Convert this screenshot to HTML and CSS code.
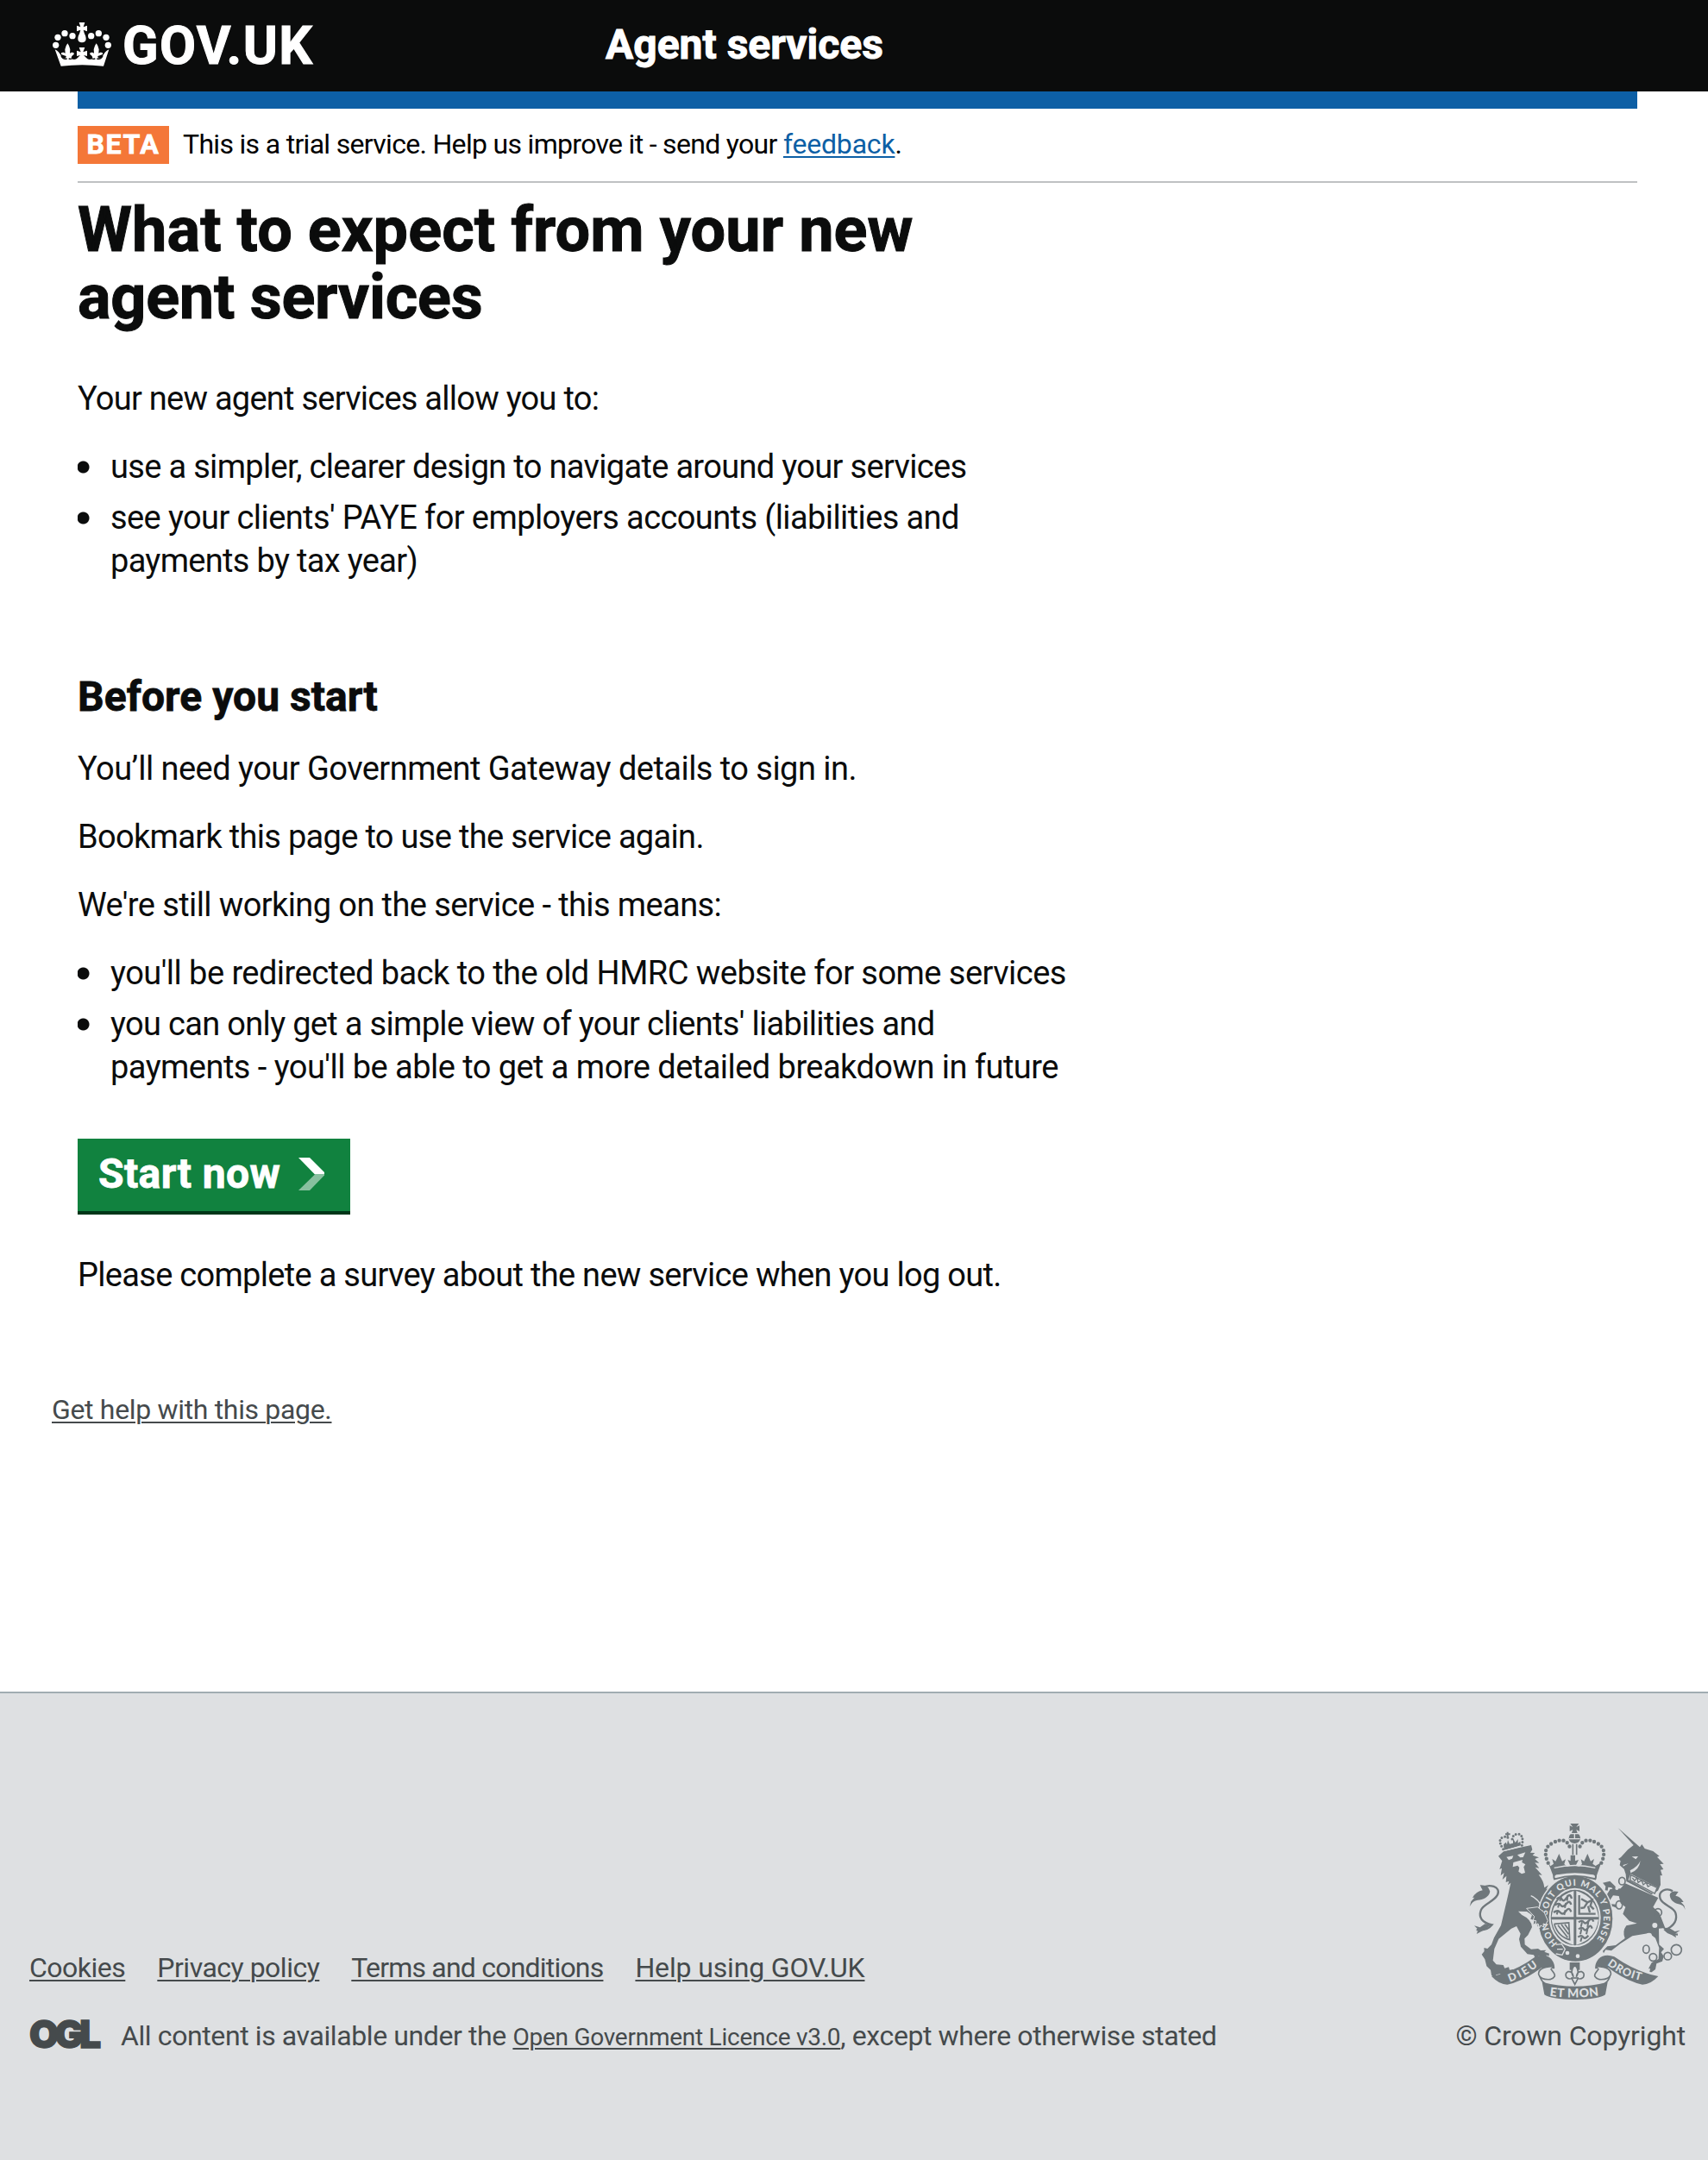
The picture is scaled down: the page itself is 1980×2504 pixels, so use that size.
FILE: index.html
```html
<!DOCTYPE html>
<html lang="en">
<head>
<meta charset="utf-8">
<title>Agent services - GOV.UK</title>
<link rel="stylesheet" href="styles.css">
</head>
<body>
<header class="header">
  <a class="logo" href="#">
    <svg class="crown" viewBox="60 75 210 159" aria-hidden="true">
      <g fill="#fff">
        <circle cx="74" cy="157" r="11"/><circle cx="81" cy="130" r="11"/><circle cx="105" cy="116" r="11"/><circle cx="132" cy="125" r="11"/>
        <circle cx="256" cy="157" r="11"/><circle cx="249" cy="130" r="11"/><circle cx="223" cy="116" r="11"/><circle cx="197" cy="125" r="11"/>
        <path d="M155 78h20l-5 16 13-5v20l-13-5 3 11c4 8 6 14 6 20 0 9-6 13-14 13s-14-4-14-13c0-6 2-12 6-20l3-11-13 5V89l13 5z"/>
        <path d="M71 172q14 7 22 23c6 12 18 9 17 0l-7-2-10-4q-2-8 8-7l6 3-1-13q3-14 9-21 6 7 9 21l-1 13 6-3q10-1 8 7l-7 6-2 6c4 8 16 7 22 0l9-9-12 3v-19l14 5-6-16h20l-6 16 14-5v19l-12-3 9 9c6 7 18 8 22 0l-2-6-7-6q-2-8 8-7l6 3-1-13q3-14 9-21 6 7 9 21l-1 13 6-3q10-1 8 7l-10 4-7 2c-1 9 11 12 17 0q8-16 22-23l-19 58q-74-9-148 0z"/>
      </g>
      <path d="M93 194q6 14 20 10M119 204q14 4 22-7M189 197q8 11 22 7M217 204q14 4 20-10" fill="none" stroke="#0b0c0c" stroke-width="4"/>
    </svg>
    <span class="logo-text">GOV.UK</span>
  </a>
  <span class="service-name">Agent services</span>
</header>

<main class="content">
  <div class="phase">
    <strong class="phase-tag">BETA</strong>
    <span class="phase-text">This is a trial service. Help us improve it - send your <a href="#">feedback</a>.</span>
  </div>
  <h1><span class="h1-first">What to expect from your new</span><br>agent services</h1>
  <p class="intro">Your new agent services allow you to:</p>
  <ul>
    <li class="snug">use a simpler, clearer design to navigate around your services</li>
    <li>see your clients' PAYE for employers accounts (liabilities and<br><span class="snug">payments by tax year)</span></li>
  </ul>
  <h2>Before you start</h2>
  <p class="loose">You’ll need your Government Gateway details to sign in.</p>
  <p class="snug">Bookmark this page to use the service again.</p>
  <p>We're still working on the service - this means:</p>
  <ul>
    <li class="loose">you'll be redirected back to the old HMRC website for some services</li>
    <li class="loose"><span class="snug">you can only get a simple view of your clients' liabilities and</span><br>payments - you'll be able to get a more detailed breakdown in future</li>
  </ul>
  <a class="start" href="#">Start now
    <svg viewBox="0 0 30 38" aria-hidden="true"><path d="M0 0h13l17 17v2.500H19z" fill="#fff"/><path d="M19 19.500h11v1L13 38H0z" fill="#88c09f"/></svg>
  </a>
  <p class="survey">Please complete a survey about the new service when you log out.</p>
</main>
<div class="help"><a href="#">Get help with this page.</a></div>

<footer class="footer">
  <div class="footer-main">
    <nav class="footer-nav">
      <a href="#">Cookies</a><a href="#">Privacy policy</a><a class="terms" href="#">Terms and conditions</a><a class="using" href="#">Help using GOV.UK</a>
    </nav>
    <div class="licence">
      <span class="ogl">OGL</span>
      <span>All content is available under the <a href="#">Open Government Licence v3.0</a>, except where otherwise stated</span>
    </div>
  </div>
  <a class="copyright" href="#">
    <svg class="arms" viewBox="70 66 756 618" aria-hidden="true">
      <defs>
        <path id="garter" d="M378 485A98 113 0 1 1 502 485"/>
        <path id="dieu" d="M212 620Q268 600 318 558"/>
        <path id="droit" d="M550 560Q606 603 672 616"/>
        <path id="etmon" d="M350 668Q437 680 526 666"/>
      </defs>
      <g class="ink">
        <!-- lion -->
        <path d="M172 182l19-17 53-12 42-9 4 16-7 10 16 1-8 8 22 8-14 5 15 14-15-1 15 19-14-3 24 27-12-1q18 22 20 45l14-9-8 15 17-8-13 23-12 8-8 23 8 14-3 22 11 14-9 10 7 14-10-3-1 12-10-9-6 10-5-15-10 6 3-14-13-4 5-14-18-12-30-1 12 12q34 16 36 43l-14 28-12 12 1 21 22 16 24-2 9 6 19-1-6 6 17 6-2 9-8-4 1 11-14-7-4 9-8-10-14 7-5-10-22-3-23-26-6-26 5-19-14-26-18 8-44 36-15 35-5 40 12 14 24 2 5 11 14-4 3 10 12-2 6 15-11-4-6 13-11-9-9 10-15-9-13 3-6 11-10-10-3-18-14-13-6-24-11-17 9-11-1-12 12 3 14-14 9-24 24-43 24-102 10-46-10 8 4-14-11 4 2-22-14 13 6-24-12 10 4-26-8 4 9-29z"/>
        <!-- unicorn -->
        <path d="M588 84l76 67 7-10 10 15 29 9 22 17-8 3 23 24-13 1 12 18-10 2 6 20-7-1 1 33-9 20-22 14-88-46-2-25-6-18-15-13 3-15-8-7 9-6 24-26 20-16z"/>
        <path d="M613 277l115 50-18 32 22 21 20 52-22 2 1 56 17 15-10 12 9 13-5 18-20 8-4 20-13 10-7-1 2-12-6 1 11-21 24-13 2-39-13-34-22-17-58 10-41 26-32 25-20-3-7 12-3-8 16-16 29-4 32-24q-10-24 5-44l37-8-27-9-22-24 9-24-17-13-6-25-20-2-13 20 8 10 14 1 3 12-13-5-7 4-11-15-9-20 18-29 36-2z"/>
        <path d="M535 275l25-6 17 17 14 19-10 11-15-24-12-2-2 12-9-1 2-14z"/>
      </g>
      <!-- tails -->
      <g class="line">
        <path d="M96 438q35 6 54-17-52-12-39-50c7-23 44-28 58-54 14-30-31-40-54-23" stroke-width="7"/>
        <path d="M796 455q-30 0-44-16 48-22 36-60c-9-22-43-25-53-48-10-30 24-40 43-27" stroke-width="7"/>
      </g>
      <g class="ink">
        <path d="M72 358l5-18 12-14-7 1q13-23 35-26l-9-18q30-1 35 22c-4 21-25 28-43 30-16 4-20 9-28 23z"/>
        <path d="M822 369l-4-15-11-12 9 0q-10-19-28-22l10-14q-28-6-30 12c2 22 22 30 36 32 11 3 14 9 18 19z"/>
        <path d="M88 424l20 6 17-12 24 1-26 20-27 14 6-15z"/><path d="M804 440l-18 4-20-12-22-1 22 20 24 15-3-14z"/>
      </g>
      <!-- lion's face -->
      <g class="cut">
        <path d="M200 185l24-4-4 10-12 5zM238 178l28-9-8 17-10 1zM224 204l32-9-2 9 12 7-6 9 5 20-12 4-11-8 3-14-6-7-17 5z"/>
        <path d="M636 184l22-1-8 10zM606 213l18-5-18 10zM630 232q28-14 36-34-4 32-34 43z"/>
        <path d="M632 244l92 46-10 25-90-50z"/>
      </g>
      <path class="line" d="M633 248l91 44-8 20-86-46zM638 258l8 10 8-12 4 18 12-8 6 16 10-8 6 14 12-6" stroke-width="4"/>
      <path d="M285 320q36 15 52 72" class="cutline" stroke-width="4"/>
      <!-- garter and shield -->
      <ellipse cx="440" cy="400" rx="131" ry="150" class="ink garter-edge"/>
      <ellipse cx="438" cy="396" rx="90" ry="103" class="cut"/>
      <ellipse cx="438" cy="396" rx="84" ry="97" class="ink"/>
      <g class="cut">
        <path d="M434 303v91h-77q8-70 77-91zM443 303q69 21 77 91h-77zM434 403v88q-67-18-77-88zM443 403h77q-10 70-77 88z"/>
      </g>
      <g class="line" stroke-width="7">
        <path d="M375 332q12-12 18 0t17-6 17 4M368 353q14-10 21 0t19-5 17 3M364 378q14-11 23 0t20-5 18 3"/>
        <path d="M390 324l-4 14M413 318l-2 20M385 345l-6 16M407 345l-4 17M380 370l-5 15M405 370l-4 17" stroke-width="6"/>
        <path d="M453 318v65h57M460 331l22 12 16-8-6 20 12 12M482 343l-12 18-12 2M484 356l6 22" />
        <path d="M451 412q12-9 18 0t17-5 17 3M451 436q12-9 18 0t15-5 14 3M449 464q12-9 18 0t18-6"/>
        <path d="M463 412l-4 16M485 409l-3 20M461 436l-4 18M482 436l-4 18M462 464l-4 15" stroke-width="6"/>
        <path d="M366 418l51-4 3 59q-39-9-54-55M379 422l34 43M391 420l25 34M403 419l14 20" stroke-width="5"/>
      </g>
      <g class="cutline" stroke-width="4"><path d="M372 490l20-2 12 18-10 20-22-4M396 506h-20"/></g>
      <g class="cut"><circle cx="412" cy="519" r="7"/><circle cx="448" cy="530" r="7"/></g>
      <text class="motto garter-text"><textPath href="#garter" textLength="508" lengthAdjust="spacing">HONI SOIT QUI MAL Y PENSE</textPath></text>
      <!-- forepaws over the garter -->
      <path class="ink cut-edge" d="M270 364l38-5 24 20 12 28-8 13-8-3 2 12-11-6-4 9-5-15-9 4 2-14-10-2 4-13z"/>
      <!-- royal crown -->
      <g class="ink">
        <path d="M422 69h30l-9 12 11-5v20l-11-6 4 12q10 6 10 20-3 14-20 16-17-2-20-16 0-14 10-20l4-12-11 6V76l11 5z"/>
        <path d="M345 204l18 48q76-27 150 0l17-48-20 12-10-7 5-17-12 8-11-26-12 26-11-7 4 17-10 8-12-3 10-20-12 4v-20h-16v20l-10-4 9 20-11 3-10-8 5-17-12 7-11-26-12 26-12-8 5 17-11 8z"/>
      </g>
      <path d="M418 104h38M437 104v17M418 122h38" class="cutline" stroke-width="4"/>
      <path d="M431 140v38M444 140v38" class="line" stroke-width="5"/>
      <path d="M345 206Q322 155 360 137 404 112 420 150M530 206Q553 155 515 137 471 112 455 150" class="line" stroke-width="13" stroke-linecap="round" stroke-dasharray="0 15"/>
      <path d="M366 223q71-17 143 0" class="cutline" stroke-width="4"/>
      <path d="M367 262q-8-19 15-19 56-10 112 0 23 0 15 19-72-21-142 0z" class="plate"/>
      <!-- lion's crown -->
      <path d="M190 142l8-8 4 8 3-16 6 14 12-3 0-16 8 14 9-12v14l8-6 2 14-58 18z" class="ink"/>
      <path d="M189 158q-24-36 3-43 14-3 18 12M254 145q8-39-16-40-17 3-18 18" class="line" stroke-width="9" stroke-linecap="round" stroke-dasharray="0 11"/>
      <path d="M204 98v20M196 106h17" class="line" stroke-width="6"/>
      <path d="M190 164l60-16" class="cutline" stroke-width="4"/>
      <!-- chain -->
      <g class="line" stroke-width="5">
        <ellipse cx="602" cy="269" rx="11" ry="13"/><ellipse cx="592" cy="352" rx="11" ry="14"/><circle cx="727" cy="378" r="13"/><ellipse cx="686" cy="506" rx="11" ry="14"/><circle cx="710" cy="534" r="13"/><circle cx="761" cy="530" r="13"/><circle cx="791" cy="508" r="18"/>
      </g>
      <g class="cut"><circle cx="716" cy="423" r="9"/><circle cx="696" cy="459" r="10"/><circle cx="584" cy="294" r="6"/></g>
      <!-- scroll -->
      <g class="ink">
        <path d="M148 600q80-14 153-68 34-12 55 8 14 19 11 34l-46-3q-64 47-118 58-28 0-55-29z"/>
        <path d="M728 600q-76-14-153-68-34-12-55 8-14 19-11 34l46-3q64 47 118 58 28 0 55-29z"/>
        <path d="M324 620q114 30 228 0l-8 44q-20 16-106 17-86-1-106-17z"/>
      </g>
      <path d="M360 566q-50 2-48 27 6 20 40 18 24-8 12-24l-10-13M515 566q50 2 48 27-6 20-40 18-24-8-12-24l10-13" class="line plate-line" stroke-width="5"/>
      <path d="M316 600q6 18 18 25M560 600q-6 18-18 25" class="line" stroke-width="5"/>
      <text class="motto"><textPath href="#dieu" textLength="112">DIEU</textPath></text><text class="motto"><textPath href="#droit" textLength="130">DROIT</textPath></text><text class="motto big"><textPath href="#etmon" textLength="172">ET MON</textPath></text>
      <!-- fleur-de-lis -->
      <path d="M420 552h35v26h-35z" class="ink"/>
      <path d="M438 560q19 21 5 42 2-20 19-18 12 6 5 20-10 8-18 3l-11 21-11-21q-8 5-18-3-7-14 5-20 17-2 19 18-14-21 5-42z" class="plate thin"/>
      <path d="M425 606h26" class="line" stroke-width="5"/>
    </svg>
    <span>© Crown Copyright</span>
  </a>
</footer>
</body>
</html>
```
FILE: styles.css
```css
* { box-sizing: border-box; }
body {
  margin: 0;
  min-height: 2504px;
  display: flex;
  flex-direction: column;
  background: #fff;
  color: #0b0c0c;
  font-family: Roboto, "Liberation Sans", sans-serif;
  font-size: 38px;
  line-height: 50px;
  letter-spacing: -0.6px;
  font-variant-ligatures: none;
}
a { color: inherit; text-decoration-thickness: 2px; text-underline-offset: 3px; }

.header {
  height: 106px;
  padding-left: 60px;
  display: flex;
  background: #0b0c0c;
  color: #fff;
  font-weight: 700;
}
.logo { display: flex; width: 642px; text-decoration: none; }
.crown { width: 70px; height: 53px; margin-top: 25px; }
.logo-text { margin: 18px 0 0 12px; font-size: 61px; line-height: 70px; letter-spacing: 1.4px; -webkit-text-stroke: 1px #fff; }
.service-name { margin-top: 22px; font-size: 48px; line-height: 60px; letter-spacing: 0; -webkit-text-stroke: 1px #fff; }

.content { width: 1808px; margin-left: 90px; border-top: 20px solid #0d5fa5; }
.phase {
  height: 86px;
  padding-top: 20px;
  display: flex;
  gap: 16px;
  border-bottom: 2px solid #bfc1c3;
  color: #000;
  font-size: 32px;
}
.phase-tag {
  width: 106px;
  height: 44px;
  text-align: center;
  background: #f47738;
  color: #fff;
  line-height: 42px;
  letter-spacing: 1.6px;
  -webkit-text-stroke: 0.8px #fff;
}
.phase-text { line-height: 42px; letter-spacing: -0.69px; }
.phase-text a { color: #0d5fa5; letter-spacing: -0.2px; }

h1 { margin: 16px 0 53px; font-size: 72px; line-height: 78px; letter-spacing: -0.25px; -webkit-text-stroke: 1px #0b0c0c; }
.h1-first { letter-spacing: 0.1px; }
h2 { margin: 103px 0 28px; font-size: 48px; line-height: 60px; letter-spacing: 0.05px; -webkit-text-stroke: 0.8px #0b0c0c; }
p { margin: 0 0 29px; }
.loose { letter-spacing: -0.54px; }
.snug { letter-spacing: -0.68px; }
.intro { letter-spacing: -0.75px; }
ul { margin: 0; padding: 0; list-style: none; }
li { padding-left: 38px; background: radial-gradient(circle at 6.5px 25.5px, #0b0c0c 6.5px, transparent 7.5px); }
li + li { margin-top: 9px; }
.start {
  width: 316px;
  height: 84px;
  margin-top: 58px;
  padding: 0 30px 2px 24px;
  display: flex;
  align-items: center;
  justify-content: space-between;
  background: #11823f;
  box-shadow: 0 4px 0 #003618;
  color: #fff;
  font-size: 48px;
  font-weight: 700;
  letter-spacing: 0.4px;
  text-decoration: none;
  -webkit-text-stroke: 0.8px #fff;
}
.start svg { width: 30px; height: 38px; }
.survey { margin: 49px 0 0; letter-spacing: -0.7px; }
.help { margin: 111px 0 0 60px; color: #454a4c; font-size: 32px; line-height: 40px; letter-spacing: -0.33px; }

.footer {
  margin-top: 307px;
  height: 543px;
  flex: none;
  padding: 0 26px 124px 34px;
  display: flex;
  align-items: flex-end;
  justify-content: space-between;
  border-top: 2px solid #a1acb2;
  background: #dee0e2;
  color: #454a4c;
  font-size: 32px;
  line-height: 40px;
}
.footer-main { display: flex; flex-direction: column; gap: 39px; }
.footer-nav { display: flex; gap: 37px; letter-spacing: -0.5px; }
.terms { letter-spacing: -0.8px; }
.using { letter-spacing: -0.15px; }
.licence { display: flex; gap: 20px; height: 40px; letter-spacing: -0.4px; }
.licence a { font-size: 28px; letter-spacing: -0.25px; }
.ogl { width: 86px; font: 900 44px/36px Inter, sans-serif; letter-spacing: -4.5px; white-space: nowrap; -webkit-text-stroke: 1.5px #454a4c; }
.copyright { display: flex; flex-direction: column; align-items: flex-end; gap: 21px; text-decoration: none; letter-spacing: -0.15px; }
.arms { width: 252px; height: 206px; margin-right: -1px; }
.ink { fill: #6f777b; }
.cut { fill: #dee0e2; }
.line { fill: none; stroke: #6f777b; }
.cutline { fill: none; stroke: #dee0e2; }
.plate { fill: #dee0e2; stroke: #6f777b; stroke-width: 6px; }
.thin { stroke-width: 5px; }
.plate-line { fill: #dee0e2; }
.cut-edge { stroke: #dee0e2; stroke-width: 3px; }
.garter-edge { stroke: #dee0e2; stroke-width: 4px; }
.motto { fill: #dee0e2; font: 900 38px Lato, sans-serif; letter-spacing: 0; }
.motto.big { font-size: 42px; }
.motto.garter-text { font-size: 31px; }
```
